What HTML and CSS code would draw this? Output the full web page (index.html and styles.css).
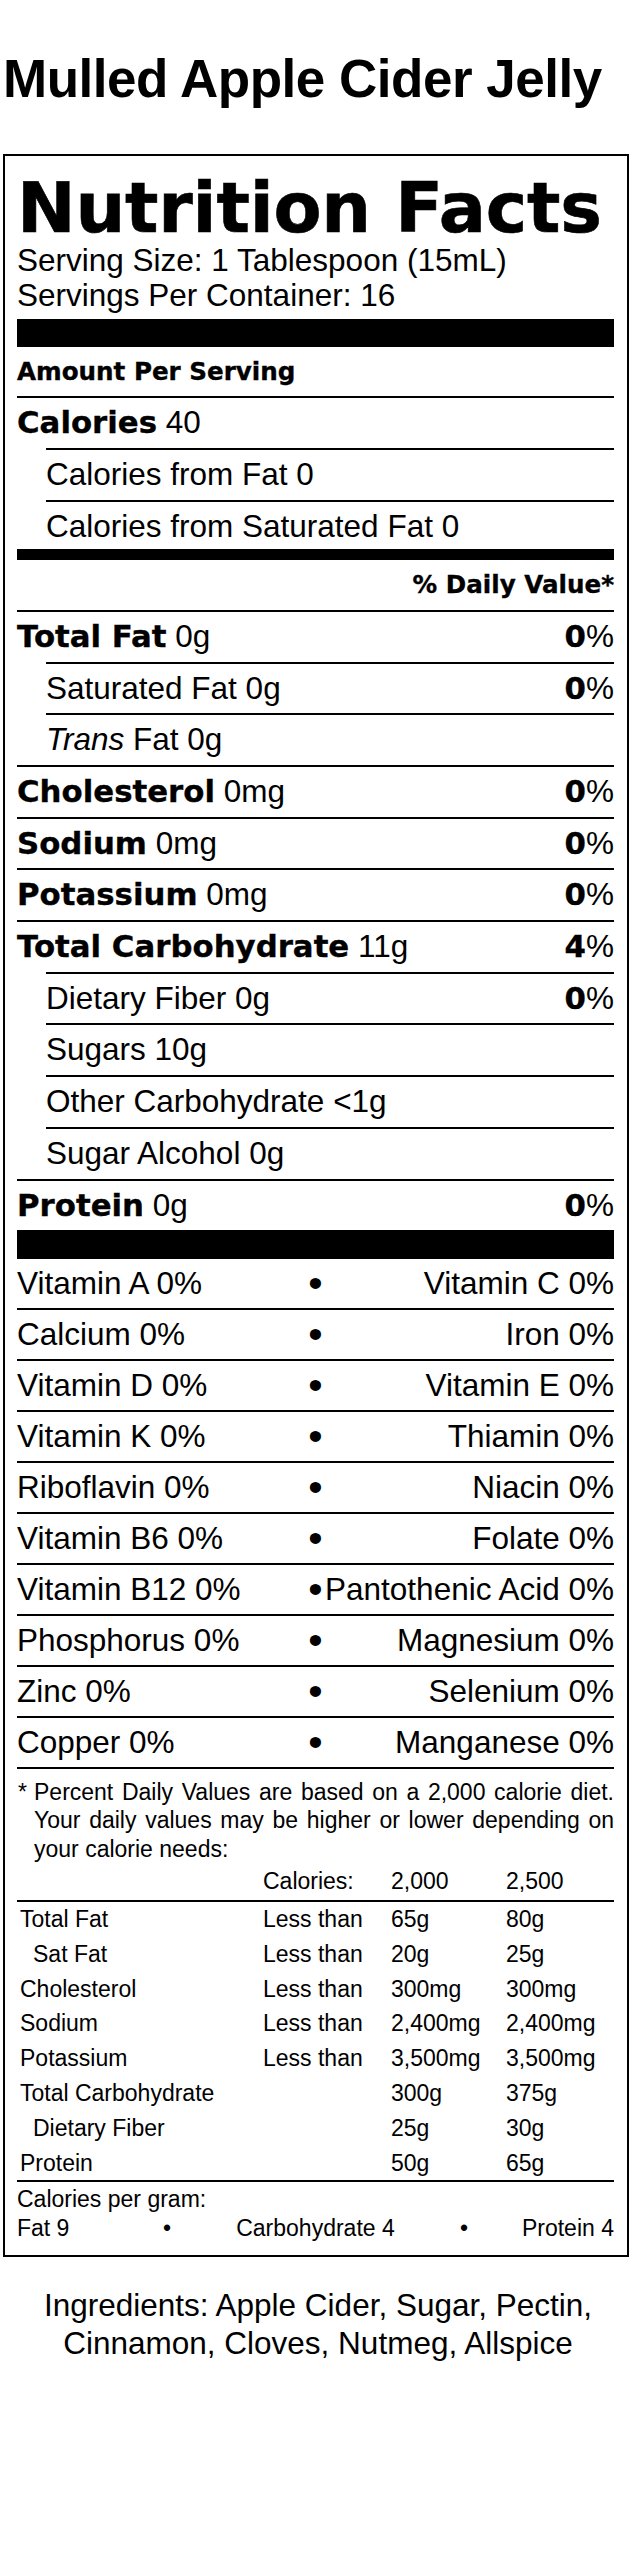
FILE: index.html
```html
<!DOCTYPE html>
<html lang="en">
<head>
<meta charset="utf-8">
<title>Mulled Apple Cider Jelly</title>
<link rel="stylesheet" href="styles.css">
</head>
<body>
<div class="page">
  <h1 class="title">Mulled Apple Cider Jelly</h1>

  <section class="label">
    <h2 class="nf-title">Nutrition Facts</h2>
    <p class="serving">Serving Size: 1 Tablespoon (15mL)</p>
    <p class="serving">Servings Per Container: 16</p>
    <div class="bar bar-lg"></div>

    <div class="row"><b class="b sb">Amount Per Serving</b></div>
    <div class="row line"><span><b class="b">Calories</b> 40</span></div>
    <div class="row line indent"><span>Calories from Fat 0</span></div>
    <div class="row line indent"><span>Calories from Saturated Fat 0</span></div>
    <div class="bar bar-md"></div>
    <div class="row right"><b class="b sb">% Daily Value*</b></div>

    <div class="row line"><span><b class="b">Total Fat</b> 0g</span><span><b class="b">0</b>%</span></div>
    <div class="row line indent"><span>Saturated Fat 0g</span><span><b class="b">0</b>%</span></div>
    <div class="row line indent"><span><i>Trans</i> Fat 0g</span></div>
    <div class="row line"><span><b class="b">Cholesterol</b> 0mg</span><span><b class="b">0</b>%</span></div>
    <div class="row line"><span><b class="b">Sodium</b> 0mg</span><span><b class="b">0</b>%</span></div>
    <div class="row line"><span><b class="b">Potassium</b> 0mg</span><span><b class="b">0</b>%</span></div>
    <div class="row line"><span><b class="b">Total Carbohydrate</b> 11g</span><span><b class="b">4</b>%</span></div>
    <div class="row line indent"><span>Dietary Fiber 0g</span><span><b class="b">0</b>%</span></div>
    <div class="row line indent"><span>Sugars 10g</span></div>
    <div class="row line indent"><span>Other Carbohydrate &lt;1g</span></div>
    <div class="row line indent"><span>Sugar Alcohol 0g</span></div>
    <div class="row line"><span><b class="b">Protein</b> 0g</span><span><b class="b">0</b>%</span></div>
    <div class="bar bar-vit"></div>

    <div class="vrow"><span>Vitamin A 0%</span><span class="dot">•</span><span class="vr">Vitamin C 0%</span></div>
    <div class="vrow line"><span>Calcium 0%</span><span class="dot">•</span><span class="vr">Iron 0%</span></div>
    <div class="vrow line"><span>Vitamin D 0%</span><span class="dot">•</span><span class="vr">Vitamin E 0%</span></div>
    <div class="vrow line"><span>Vitamin K 0%</span><span class="dot">•</span><span class="vr">Thiamin 0%</span></div>
    <div class="vrow line"><span>Riboflavin 0%</span><span class="dot">•</span><span class="vr">Niacin 0%</span></div>
    <div class="vrow line"><span>Vitamin B6 0%</span><span class="dot">•</span><span class="vr">Folate 0%</span></div>
    <div class="vrow line"><span>Vitamin B12 0%</span><span class="dot">•</span><span class="vr">Pantothenic Acid 0%</span></div>
    <div class="vrow line"><span>Phosphorus 0%</span><span class="dot">•</span><span class="vr">Magnesium 0%</span></div>
    <div class="vrow line"><span>Zinc 0%</span><span class="dot">•</span><span class="vr">Selenium 0%</span></div>
    <div class="vrow line"><span>Copper 0%</span><span class="dot">•</span><span class="vr">Manganese 0%</span></div>

    <div class="foot">
      <span class="ast">*</span>
      <p>Percent Daily Values are based on a 2,000 calorie diet. Your daily values may be higher or lower depending on your calorie needs:</p>
    </div>

    <div class="dv-table">
      <div class="dv-row dv-head"><span></span><span>Calories:</span><span>2,000</span><span>2,500</span></div>
      <div class="dv-row"><span class="lbl">Total Fat</span><span>Less than</span><span>65g</span><span>80g</span></div>
      <div class="dv-row"><span class="lbl sub">Sat Fat</span><span>Less than</span><span>20g</span><span>25g</span></div>
      <div class="dv-row"><span class="lbl">Cholesterol</span><span>Less than</span><span>300mg</span><span>300mg</span></div>
      <div class="dv-row"><span class="lbl">Sodium</span><span>Less than</span><span>2,400mg</span><span>2,400mg</span></div>
      <div class="dv-row"><span class="lbl">Potassium</span><span>Less than</span><span>3,500mg</span><span>3,500mg</span></div>
      <div class="dv-row"><span class="lbl">Total Carbohydrate</span><span></span><span>300g</span><span>375g</span></div>
      <div class="dv-row"><span class="lbl sub">Dietary Fiber</span><span></span><span>25g</span><span>30g</span></div>
      <div class="dv-row"><span class="lbl">Protein</span><span></span><span>50g</span><span>65g</span></div>
    </div>

    <div class="cpg">
      <div>Calories per gram:</div>
      <div class="cpg-row"><span>Fat 9</span><span class="cdot">•</span><span class="cmid">Carbohydrate 4</span><span class="cdot">•</span><span class="cend">Protein 4</span></div>
    </div>
  </section>

  <p class="ingredients">Ingredients: Apple Cider, Sugar, Pectin, Cinnamon, Cloves, Nutmeg, Allspice</p>
</div>
</body>
</html>
```
FILE: styles.css
```css
html, body {
  margin: 0;
  padding: 0;
  background: #fff;
}

body {
  font-family: "Liberation Sans", Arial, sans-serif;
  color: #000;
}

.page {
  width: 636px;
  box-sizing: border-box;
  padding-left: 3px;
}

.title {
  margin: 0 0 45px;
  padding-top: 49px;
  font-size: 53px;
  line-height: 60px;
  font-weight: 700;
  letter-spacing: -0.5px;
}

.label {
  width: 626px;
  box-sizing: border-box;
  border: 2px solid #000;
  padding: 16.5px 13px 12.5px 12px;
  font-size: 31.5px;
}

.nf-title {
  margin: 0;
  font-family: "DejaVu Sans", sans-serif;
  font-weight: 700;
  font-size: 70px;
  line-height: 70px;
  letter-spacing: -0.2px;
  -webkit-text-stroke: 0.6px #000;
}

.serving {
  margin: 0;
  line-height: 35px;
}

.bar {
  background: #000;
}

.bar-lg {
  height: 28px;
  margin-top: 6px;
}

.bar-md {
  height: 11px;
  margin-top: -2px;
}

.bar-vit {
  height: 29px;
}

.row {
  display: flex;
  justify-content: space-between;
  align-items: baseline;
  height: 49.7px;
  line-height: 49.7px;
  white-space: nowrap;
}

.row.right {
  justify-content: flex-end;
}

.line {
  border-top: 2px solid #000;
}

.indent {
  margin-left: 29px;
}

.b {
  font-family: "DejaVu Sans", sans-serif;
  font-weight: 700;
  font-size: 30.8px;
  -webkit-text-stroke: 0.35px #000;
}

.sb {
  font-size: 24.6px;
}

.vrow {
  display: grid;
  grid-template-columns: 1fr auto 1fr;
  align-items: baseline;
  height: 49px;
  line-height: 49px;
  white-space: nowrap;
}

.dot {
  display: inline-block;
  transform: scale(1.3);
}

.vr {
  text-align: right;
}

.foot {
  display: flex;
  border-top: 2px solid #000;
  padding-top: 9px;
  font-size: 23px;
  line-height: 28.3px;
}

.foot .ast {
  flex: none;
  width: 16px;
  padding-left: 1px;
}

.foot p {
  flex: 1;
  margin: 0;
  text-align: justify;
}

.dv-table {
  font-size: 23px;
}

.dv-row {
  display: grid;
  grid-template-columns: 246px 128px 115px 1fr;
  height: 34.8px;
  line-height: 34.8px;
  white-space: nowrap;
}

.dv-row.dv-head {
  height: 39px;
  line-height: 37px;
  border-bottom: 2px solid #000;
  box-sizing: border-box;
}

.lbl {
  padding-left: 3px;
}

.lbl.sub {
  padding-left: 16px;
}

.cpg {
  border-top: 2px solid #000;
  padding-top: 2.5px;
  font-size: 23px;
  line-height: 29px;
}

.cpg-row {
  display: grid;
  grid-template-columns: 144px 12px 1fr 12px 144px;
}

.cdot,
.cmid {
  text-align: center;
}

.cend {
  text-align: right;
}

.ingredients {
  margin: 29px 0 0 -3px;
  font-size: 31.5px;
  line-height: 38px;
  text-align: center;
}
```
